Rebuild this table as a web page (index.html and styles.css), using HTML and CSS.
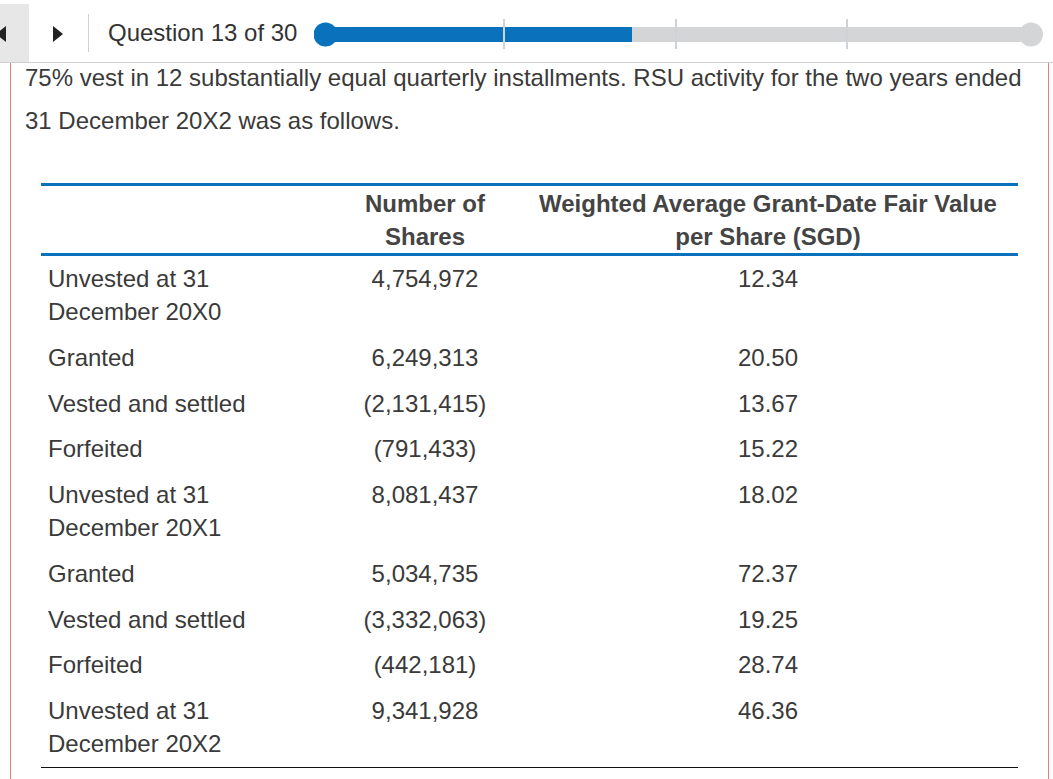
FILE: index.html
```html
<!DOCTYPE html>
<html lang="en">
<head>
<meta charset="utf-8">
<title>Question 13 of 30</title>
<link rel="stylesheet" href="styles.css">
</head>
<body>
<header class="topbar">
  <div class="nav-prev">
    <svg class="tri" width="29" height="58" viewBox="0 0 29 58"><polygon points="6,22 6,38 -4,30" fill="#222"/></svg>
  </div>
  <div class="nav-next">
    <svg width="10" height="16" viewBox="0 0 10 16"><polygon points="0,0 10,8 0,16" fill="#222"/></svg>
  </div>
  <div class="sep"></div>
  <div class="qtitle">Question 13 of 30</div>
  <svg class="progress" width="730" height="62" viewBox="0 0 730 62">
    <rect x="11.5" y="27" width="706" height="15" fill="#d4d5d7"/>
    <circle cx="717" cy="34.5" r="12" fill="#d4d5d7"/>
    <rect x="11.5" y="27" width="306.5" height="15" fill="#0a72bd"/>
    <circle cx="11.5" cy="34.5" r="12" fill="#0a72bd"/>
    <rect x="189" y="19" width="2" height="30" fill="#cfd2d6"/>
    <rect x="361" y="19" width="2" height="30" fill="#cfd2d6"/>
    <rect x="532" y="19" width="2" height="30" fill="#cfd2d6"/>
  </svg>
</header>
<main class="content">
  <p class="stem">75% vest in 12 substantially equal quarterly installments. RSU activity for the two years ended<br>31 December 20X2 was as follows.</p>
  <table class="rsu">
    <colgroup>
      <col class="c1"><col class="c2"><col class="c3">
    </colgroup>
    <thead>
      <tr>
        <th></th>
        <th class="num">Number of<br>Shares</th>
        <th class="num">Weighted Average Grant-Date Fair Value<br>per Share (SGD)</th>
      </tr>
    </thead>
    <tbody>
      <tr><td>Unvested at 31<br>December 20X0</td><td class="num">4,754,972</td><td class="num">12.34</td></tr>
      <tr><td>Granted</td><td class="num">6,249,313</td><td class="num">20.50</td></tr>
      <tr class="tight"><td>Vested and settled</td><td class="num">(2,131,415)</td><td class="num">13.67</td></tr>
      <tr><td>Forfeited</td><td class="num">(791,433)</td><td class="num">15.22</td></tr>
      <tr><td>Unvested at 31<br>December 20X1</td><td class="num">8,081,437</td><td class="num">18.02</td></tr>
      <tr><td>Granted</td><td class="num">5,034,735</td><td class="num">72.37</td></tr>
      <tr class="tight"><td>Vested and settled</td><td class="num">(3,332,063)</td><td class="num">19.25</td></tr>
      <tr><td>Forfeited</td><td class="num">(442,181)</td><td class="num">28.74</td></tr>
      <tr class="last"><td>Unvested at 31<br>December 20X2</td><td class="num">9,341,928</td><td class="num">46.36</td></tr>
    </tbody>
  </table>
</main>
</body>
</html>
```
FILE: styles.css
```css
* { box-sizing: border-box; }
html, body {
  margin: 0;
  padding: 0;
  background: #fff;
  height: 100%;
  overflow: hidden;
}
body {
  font-family: "Liberation Sans", Arial, sans-serif;
  color: #333;
}
.topbar {
  display: flex;
  align-items: center;
  height: 63px;
  border-bottom: 1px solid #cfcfcf;
  background: #fff;
}
.nav-prev {
  align-self: stretch;
  width: 29px;
  margin-top: 4px;
  background: #e7e7e7;
  overflow: hidden;
}
.nav-prev .tri { display: block; overflow: visible; }
.nav-next {
  width: 59px;
  height: 62px;
  display: flex;
  align-items: center;
  padding-left: 24px;
  padding-top: 6px;
}
.nav-next svg { display: block; }
.sep {
  width: 1px;
  height: 38px;
  margin-top: 4px;
  background: #d0d0d0;
}
.qtitle {
  margin-left: 19px;
  margin-top: 4px;
  font-size: 24px;
  line-height: 30px;
  color: #333;
  white-space: nowrap;
}
.progress {
  display: block;
  margin-left: auto;
  margin-right: 9px;
  align-self: flex-start;
}
.content {
  margin: 0 4px 0 10px;
  height: calc(100% - 63px);
  border-left: 1px solid #d9857c;
  border-right: 1px solid #d9857c;
  padding: 0 10px 0 14px;
  overflow: hidden;
}
.stem {
  margin: -7px 0 0 0;
  font-size: 24px;
  line-height: 43px;
  color: #3a3a3a;
  white-space: nowrap;
}
.rsu {
  margin: 41px 0 0 16px;
  width: 977px;
  table-layout: fixed;
  border-collapse: collapse;
  font-size: 24px;
  line-height: 33px;
  color: #3a3a3a;
}
.rsu col.c1 { width: 291px; }
.rsu col.c2 { width: 186px; }
.rsu col.c3 { width: 500px; }
.rsu thead tr {
  border-top: 3px solid #0a72bd;
  border-bottom: 3px solid #0a72bd;
}
.rsu th {
  font-weight: bold;
  padding: 1px 7px 0;
  color: #444;
  vertical-align: bottom;
}
.rsu td {
  padding: 6px 7px 7px;
  vertical-align: top;
  text-align: left;
}
.rsu tr.tight td { padding-bottom: 6px; }
.rsu .num { text-align: center; }
.rsu tr.last { border-bottom: 1px solid #111; }
```
